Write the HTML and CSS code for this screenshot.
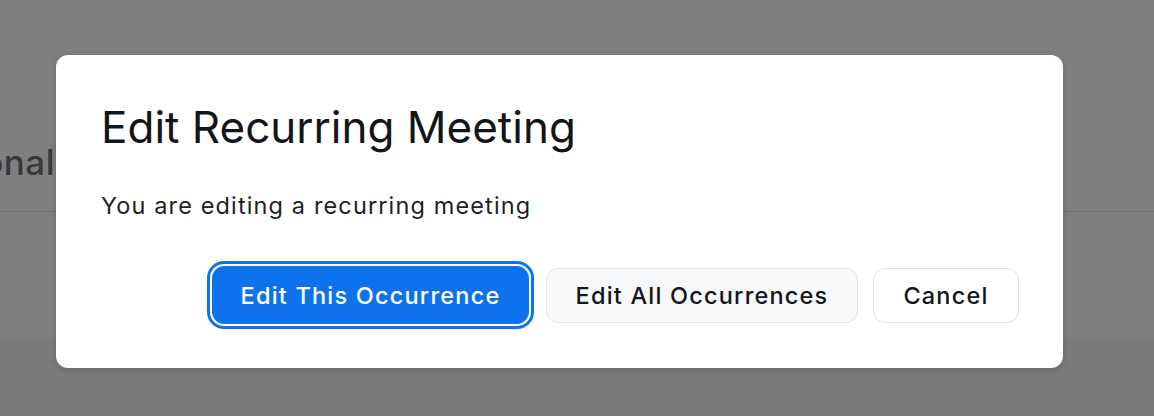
FILE: index.html
```html
<!DOCTYPE html>
<html>
<head>
  <title>Edit Recurring Meeting</title>
  <meta charset="UTF-8">
  <link rel="stylesheet" href="styles.css">
</head>
<body>
  <!-- page behind the modal -->
  <div class="page">
    <div class="page-header">
      <h2 class="page-title">Personal</h2>
    </div>
    <div class="page-body"></div>
    <div class="page-footer"></div>
  </div>

  <!-- modal -->
  <div class="overlay">
    <div class="dialog">
      <h1 class="dialog-title">Edit Recurring Meeting</h1>
      <p class="dialog-text">You are editing a recurring meeting</p>
      <div class="dialog-actions">
        <button class="btn btn-primary">Edit This Occurrence</button>
        <button class="btn btn-secondary">Edit All Occurrences</button>
        <button class="btn btn-plain">Cancel</button>
      </div>
    </div>
  </div>
</body>
</html>
```

FILE: styles.css
```css
html, body { height: 100%; }
body {
  margin: 0;
  font-family: Inter, "Noto Sans", sans-serif;
  color: #131619;
  background: #fff;
  overflow: hidden;
  position: relative;
}

/* background page */
.page { display: flex; flex-direction: column; height: 100%; }
.page-header { height: 211px; border-bottom: 1px solid #dedede; display: flex; align-items: flex-end; }
.page-title { margin: 0 0 28px 0; text-indent: -95px; font-size: 35px; font-weight: 500; letter-spacing: 0.5px; color: #6e737a; }
.page-body { height: 128px; }
.page-footer { flex-grow: 1; background: #f6f6f7; }

/* modal */
.overlay {
  position: absolute;
  inset: 0;
  background: rgba(0, 0, 0, 0.5);
  display: flex;
  align-items: flex-start;
  padding: 55px 0 0 56px;
}
.dialog {
  width: 1007px;
  box-sizing: border-box;
  padding: 45px 44px 44px 45px;
  background: #fff;
  border-radius: 12px;
  box-shadow: 0 2px 6px rgba(0, 0, 0, 0.18);
}
.dialog-title { margin: 0; font-size: 44px; font-weight: 400; color: #131619; }
.dialog-text { margin: 37px 0 0 0; font-size: 23.5px; letter-spacing: 1.13px; color: #1d1f22; }
.dialog-actions { display: flex; justify-content: flex-end; align-items: center; gap: 15px; margin-top: 46px; }

.btn {
  font-family: inherit;
  font-size: 23.5px;
  font-weight: 500;
  letter-spacing: 1.2px;
  height: 55px;
  padding: 0;
  border-radius: 12px;
  border: 1px solid #e2e3e6;
  background: #fff;
  color: #131619;
  cursor: pointer;
}
.btn-primary {
  height: 58px;
  width: 317px;
  background: #0e72ed;
  border-color: #0e72ed;
  color: #fff;
  outline: 3px solid #0e72ed;
  outline-offset: 2px;
  margin-right: 2px;
}
.btn-secondary { width: 312px; background: #f7f8fa; }
.btn-plain { width: 146px; }
```
